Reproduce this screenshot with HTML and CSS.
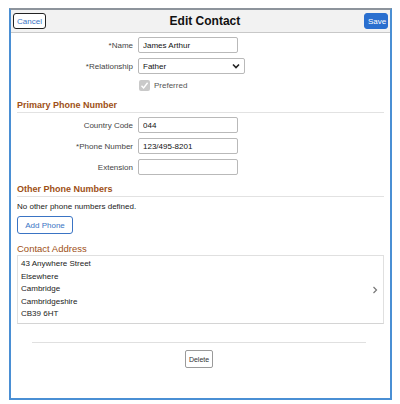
FILE: index.html
```html
<!DOCTYPE html>
<html lang="en">
<head>
    <meta charset="UTF-8">
    <title>Edit Contact</title>
    <link rel="stylesheet" href="styles.css">
</head>
<body>
    <div class="frame">
        <!-- title bar -->
        <div class="titlebar">
            <button class="btn-cancel">Cancel</button>
            <div class="title">Edit Contact</div>
            <button class="btn-save">Save</button>
        </div>

        <div class="content">
            <div class="form">
                <label class="lbl">*Name</label>
                <input class="field" type="text" value="James Arthur">
                <label class="lbl">*Relationship</label>
                <div class="select">Father
                    <svg width="8" height="6" viewBox="0 0 8 6"><path d="M1 1.5 L4 4.5 L7 1.5" fill="none" stroke="#222" stroke-width="1.6"/></svg>
                </div>
                <span></span>
                <div class="check-row">
                    <span class="checkbox">
                        <svg width="9" height="9" viewBox="0 0 9 9"><path d="M1.5 4.8 L3.6 7 L7.6 1.8" fill="none" stroke="#fff" stroke-width="1.4"/></svg>
                    </span>
                    <span class="check-lbl">Preferred</span>
                </div>
            </div>

            <h3 class="section">Primary Phone Number</h3>
            <div class="form">
                <label class="lbl">Country Code</label>
                <input class="field" type="text" value="044">
                <label class="lbl">*Phone Number</label>
                <input class="field" type="text" value="123/495-8201">
                <label class="lbl">Extension</label>
                <input class="field" type="text" value="">
            </div>

            <h3 class="section">Other Phone Numbers</h3>
            <p class="note">No other phone numbers defined.</p>
            <button class="btn-add">Add Phone</button>

            <h3 class="section address-head">Contact Address</h3>
            <div class="address">
                <div class="lines">
                    <div>43 Anywhere Street</div>
                    <div>Elsewhere</div>
                    <div>Cambridge</div>
                    <div>Cambridgeshire</div>
                    <div>CB39 6HT</div>
                </div>
                <svg class="chev" width="6" height="8" viewBox="0 0 6 8"><path d="M1.5 1 L4.5 4 L1.5 7" fill="none" stroke="#777" stroke-width="1.2"/></svg>
            </div>

            <div class="footer">
                <button class="btn-delete">Delete</button>
            </div>
        </div>
    </div>
</body>
</html>
```

FILE: styles.css
```css
/* page */
body {
    margin: 0;
    font-family: "Liberation Sans", Arial, sans-serif;
    font-size: 8px;
    color: #222;
    background: #fff;
}

.frame {
    width: 379px;
    height: 388px;
    margin: 8px 0 0 9px;
    border: 2px solid #4a8fd4;
    border-top-color: #8d949c;
}

/* title bar */
.titlebar {
    height: 22px;
    background: #f2f2f2;
    border-bottom: 1px solid #c8c8c8;
    display: flex;
    align-items: center;
    justify-content: space-between;
    padding: 0 2px 0 2px;
}

.title {
    font-size: 12px;
    font-weight: bold;
    color: #111;
}

.titlebar button {
    font-family: inherit;
    font-size: 8px;
    height: 16px;
    padding: 0 3px;
    border-radius: 3px;
    cursor: pointer;
}

.btn-cancel {
    background: #fff;
    color: #3a74c4;
    border: 1px solid #222;
}

.btn-save {
    background: #2a6fcf;
    color: #fff;
    border: 1px solid #2a6fcf;
    width: 24px;
    padding: 0;
}

.content {
    padding: 0 6px;
}

/* form rows */
.form {
    display: grid;
    grid-template-columns: 116px 106px;
    column-gap: 5px;
    row-gap: 5px;
    align-items: center;
    padding-top: 4px;
}

.lbl {
    text-align: right;
    color: #444;
}

.field {
    box-sizing: border-box;
    width: 100px;
    height: 16px;
    border: 1px solid #b9b9b9;
    border-radius: 2px;
    padding: 0 4px;
    font-family: inherit;
    font-size: 8px;
    color: #111;
}

.select {
    box-sizing: border-box;
    width: 107px;
    height: 16px;
    border: 1px solid #b9b9b9;
    border-radius: 2px;
    padding: 0 4px;
    display: flex;
    align-items: center;
    justify-content: space-between;
    color: #111;
}

.check-row {
    display: flex;
    align-items: center;
    gap: 4px;
    height: 12px;
    padding-left: 1px;
}

.checkbox {
    width: 11px;
    height: 11px;
    background: #c9c9c9;
    border-radius: 2px;
    display: flex;
    align-items: center;
    justify-content: center;
}

.check-lbl {
    color: #555;
}

/* sections */
.section {
    margin: 0;
    padding: 9px 0 2px;
    font-size: 9px;
    font-weight: bold;
    color: #9e4f16;
    border-bottom: 1px solid #e2e2e2;
}

.address-head {
    font-weight: normal;
    font-size: 9.5px;
    border-bottom: none;
    padding-bottom: 1px;
}

.note {
    margin: 5px 0 0;
}

.btn-add {
    margin-top: 5px;
    height: 18px;
    width: 56px;
    background: #fff;
    color: #3a74c4;
    border: 1px solid #3a74c4;
    border-radius: 3px;
    font-family: inherit;
    font-size: 8px;
}

.address {
    border: 1px solid #e0e0e0;
    border-bottom-color: #d4d4d4;
    height: 67px;
    display: flex;
    align-items: center;
    justify-content: space-between;
    padding: 0 5px 0 3px;
}

.lines div {
    line-height: 12.5px;
}

.footer {
    margin: 18px 18px 0 15px;
    border-top: 1px solid #e0e0e0;
    padding-top: 7px;
    display: flex;
    justify-content: center;
}

.btn-delete {
    height: 18px;
    width: 28px;
    padding: 0;
    background: #fff;
    border: 1px solid #9a9a9a;
    border-radius: 2px;
    font-family: inherit;
    font-size: 7px;
    color: #333;
}
```
